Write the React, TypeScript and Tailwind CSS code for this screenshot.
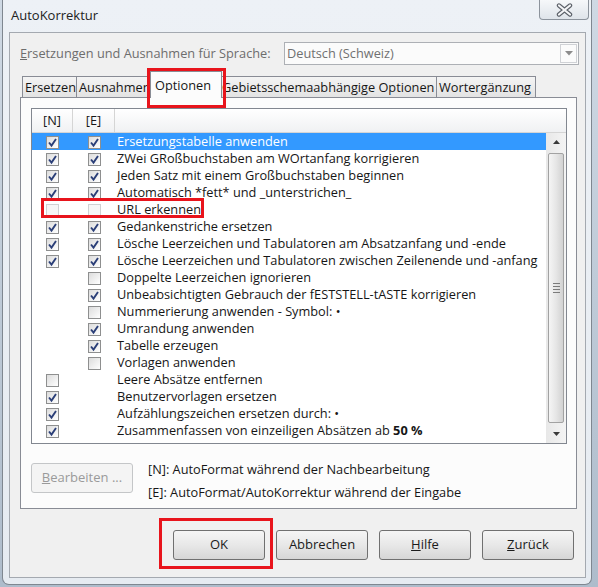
import React from 'react';

type Box = 'on' | 'off' | 'dis' | null;

const rows: { n: Box; e: Box; label: React.ReactNode }[] = [
  { n: 'on', e: 'on', label: 'Ersetzungstabelle anwenden' },
  { n: 'on', e: 'on', label: 'ZWei GRoßbuchstaben am WOrtanfang korrigieren' },
  { n: 'on', e: 'on', label: 'Jeden Satz mit einem Großbuchstaben beginnen' },
  { n: 'on', e: 'on', label: 'Automatisch *fett* und _unterstrichen_' },
  { n: 'dis', e: 'dis', label: 'URL erkennen' },
  { n: 'on', e: 'on', label: 'Gedankenstriche ersetzen' },
  { n: 'on', e: 'on', label: 'Lösche Leerzeichen und Tabulatoren am Absatzanfang und -ende' },
  { n: 'on', e: 'on', label: 'Lösche Leerzeichen und Tabulatoren zwischen Zeilenende und -anfang' },
  { n: null, e: 'off', label: 'Doppelte Leerzeichen ignorieren' },
  { n: null, e: 'on', label: 'Unbeabsichtigten Gebrauch der fESTSTELL-tASTE korrigieren' },
  { n: null, e: 'off', label: 'Nummerierung anwenden - Symbol: •' },
  { n: null, e: 'on', label: 'Umrandung anwenden' },
  { n: null, e: 'on', label: 'Tabelle erzeugen' },
  { n: null, e: 'off', label: 'Vorlagen anwenden' },
  { n: 'off', e: null, label: 'Leere Absätze entfernen' },
  { n: 'on', e: null, label: 'Benutzervorlagen ersetzen' },
  { n: 'on', e: null, label: 'Aufzählungszeichen ersetzen durch: •' },
  {
    n: 'on',
    e: null,
    label: (
      <>
        Zusammenfassen von einzeiligen Absätzen ab <b className="font-bold">50 %</b>
      </>
    ),
  },
];

const Check = ({ state }: { state: Box }) => {
  if (!state) return null;
  const dis = state === 'dis';
  return (
    <div
      className={`w-[13px] h-[13px] border flex items-center justify-center ${
        dis
          ? 'border-[#cfd1d3] bg-[#f6f6f6]'
          : 'border-[#8e8f8f] bg-linear-to-br from-[#dcdcdc] to-[#ffffff]'
      }`}
    >
      {state === 'on' && (
        <svg width="11" height="11" viewBox="0 0 11 11">
          <path d="M2 5.5 L4.5 8.6 L9 2" fill="none" stroke="#2b3f78" strokeWidth="1.9" />
        </svg>
      )}
    </div>
  );
};

const Btn = ({ children }: { children: React.ReactNode }) => (
  <div className="w-[92px] h-[30px] rounded-[3px] border border-[#707070] bg-linear-to-b from-[#f5f5f5] via-[#e8e8e8] to-[#d6d6d6] text-[#1b1b1b] flex items-center justify-center text-[13px]">
    {children}
  </div>
);

const Tab = ({ label, w, sel }: { label: string; w: string; sel?: boolean }) => (
  <div
    className={`${w} shrink-0 overflow-hidden whitespace-nowrap border border-[#898c95] border-b-0 text-[12.75px] ${
      sel
        ? 'relative z-10 h-[27px] -mx-[2px] mb-[-1px] bg-[#fcfcfc] px-[4px] pt-[4px]'
        : '-ml-px first:ml-0 h-[21px] bg-linear-to-b from-[#f4f4f4] to-[#e3e3e3] px-[2px] pt-[1px]'
    }`}
  >
    {label}
  </div>
);

export default function App() {
  return (
    <div
      className="relative w-[598px] h-[587px] overflow-hidden bg-linear-to-b from-[#cfd9e4] to-[#aebccb] text-[#161616]"
      style={{ fontFamily: '"Open Sans", "Noto Sans", sans-serif' }}
    >
      {/* window frame */}
      <div className="ml-[2px] w-[590px] h-[585px] border border-t-0 border-[#7f8790] rounded-b-[7px] bg-linear-to-b from-[#edf1f6] to-[#e6ebf1] flex flex-col">
        <div className="h-[32px] flex items-start justify-between">
          <div className="pl-[8px] pt-[6px] text-[13px] text-[#222]">AutoKorrektur</div>
          <div className="mr-[2px] w-[50px] h-[20px] border border-t-0 border-[#8c939c] rounded-b-[4px] bg-linear-to-b from-[#f6f8fa] to-[#dfe4ea] flex items-center justify-center">
            <svg width="17" height="14" viewBox="0 0 17 14">
              <path d="M3 2.5 L14 11.5 M14 2.5 L3 11.5" stroke="#5b6068" strokeWidth="4.4" strokeLinecap="round" />
              <path d="M3 2.5 L14 11.5 M14 2.5 L3 11.5" stroke="#f4f5f7" strokeWidth="2.2" strokeLinecap="round" />
            </svg>
          </div>
        </div>

        {/* client area */}
        <div className="mx-[6px] w-[577px] h-[546px] border border-[#a4a9b0] bg-[#f0f0f0] flex flex-col">
          <div className="mt-[9px] h-[23px] flex items-center">
            <div className="pl-[10px] text-[12.75px] text-[#6d6d6d]">
              <span className="underline">E</span>rsetzungen und Ausnahmen für Sprache:
            </div>
            <div className="ml-auto mr-[6px] w-[295px] h-[23px] border border-[#adb0b5] bg-[#fbfbfb] flex items-center">
              <div className="flex-1 pl-[2px] text-[12.75px] text-[#707070]">Deutsch (Schweiz)</div>
              <div className="w-[17px] h-[19px] mr-px border border-[#d0d2d6] flex items-center justify-center">
                <svg width="8" height="5" viewBox="0 0 8 5">
                  <path d="M0 0 L8 0 L4 4.5 Z" fill="#8c8c8c" />
                </svg>
              </div>
            </div>
          </div>

          {/* tabs */}
          <div className="mt-[6px] pl-[12px] flex items-end h-[26px]">
            <Tab label="Ersetzen" w="w-[55px]" />
            <Tab label="Ausnahmen" w="w-[76px]" />
            <Tab label="Optionen" w="w-[72px]" sel />
            <Tab label="Gebietsschemaabhängige Optionen" w="w-[218px]" />
            <Tab label="Wortergänzung" w="w-[100px]" />
          </div>

          {/* tab panel */}
          <div className="ml-[10px] w-[557px] h-[412px] border border-[#898c95] bg-[#fcfcfc] pl-[10px] pt-[10px] flex flex-col">
            <div className="w-[536px] h-[336px] border border-[#828790] bg-white flex flex-col">
              <div className="h-[24px] flex border-b border-[#d5d5d5] bg-linear-to-b from-[#ffffff] to-[#f0f1f3] text-[12.75px]">
                <div className="w-[41px] border-r border-[#d5d5d5] flex items-center justify-center">[N]</div>
                <div className="w-[42px] border-r border-[#d5d5d5] flex items-center justify-center">[E]</div>
                <div className="flex-1" />
              </div>
              <div className="flex flex-1">
                <div className="flex-1">
                  {rows.map((r, i) => (
                    <div
                      key={i}
                      className={`h-[17px] flex items-center whitespace-nowrap text-[12.75px] ${
                        i === 0 ? 'bg-[#3399ff] text-white' : ''
                      }`}
                    >
                      <div className="w-[41px] pt-[2px] flex justify-center">
                        <Check state={r.n} />
                      </div>
                      <div className="w-[42px] pt-[2px] flex justify-center">
                        <Check state={r.e} />
                      </div>
                      <div className="pl-[2px] pt-px">{r.label}</div>
                    </div>
                  ))}
                </div>
                {/* scrollbar */}
                <div className="w-[20px] bg-linear-to-r from-[#e8e8e8] to-[#f4f4f4] flex flex-col items-center">
                  <div className="h-[18px] flex items-center justify-center">
                    <svg width="7" height="4" viewBox="0 0 7 4">
                      <path d="M0 4 L7 4 L3.5 0 Z" fill="#3a3a3a" />
                    </svg>
                  </div>
                  <div className="w-[16px] flex-1 my-[2px] rounded-[2px] border border-[#a2a2a2] bg-linear-to-r from-[#f5f5f5] via-[#e6e6e6] to-[#d2d2d2] flex items-center justify-center">
                    <div className="flex flex-col gap-[2px]">
                      <div className="w-[7px] h-px bg-[#7b7b7b]" />
                      <div className="w-[7px] h-px bg-[#7b7b7b]" />
                      <div className="w-[7px] h-px bg-[#7b7b7b]" />
                      <div className="w-[7px] h-px bg-[#7b7b7b]" />
                    </div>
                  </div>
                  <div className="h-[18px] flex items-center justify-center">
                    <svg width="7" height="4" viewBox="0 0 7 4">
                      <path d="M0 0 L7 0 L3.5 4 Z" fill="#3a3a3a" />
                    </svg>
                  </div>
                </div>
              </div>
            </div>

            <div className="mt-[19px] flex items-start">
              <div className="w-[102px] h-[30px] rounded-[3px] border border-[#c4c6c8] bg-[#f4f4f4] text-[#9a9a9a] text-[13px] flex items-center justify-center">
                <span>
                  <span className="underline">B</span>earbeiten ...
                </span>
              </div>
              <div className="ml-[15px] text-[12.75px] leading-[23px] -mt-[5px]">
                <div>[N]: AutoFormat während der Nachbearbeitung</div>
                <div>[E]: AutoFormat/AutoKorrektur während der Eingabe</div>
              </div>
            </div>
          </div>

          {/* buttons */}
          <div className="mt-[21px] pr-[11px] flex justify-end gap-[11px]">
            <Btn>OK</Btn>
            <Btn>Abbrechen</Btn>
            <Btn>
              <span>
                <span className="underline">H</span>ilfe
              </span>
            </Btn>
            <Btn>
              <span>
                <span className="underline">Z</span>urück
              </span>
            </Btn>
          </div>
        </div>
      </div>

      {/* red annotation boxes */}
      <div className="absolute left-[147px] top-[68px] w-[79px] h-[40px] border-[3px] border-[#e8141c]" />
      <div className="absolute left-[41px] top-[198px] w-[163px] h-[20px] border-[3px] border-[#e8141c]" />
      <div className="absolute left-[159px] top-[518px] w-[114px] h-[51px] border-[3px] border-[#e8141c]" />
    </div>
  );
}
